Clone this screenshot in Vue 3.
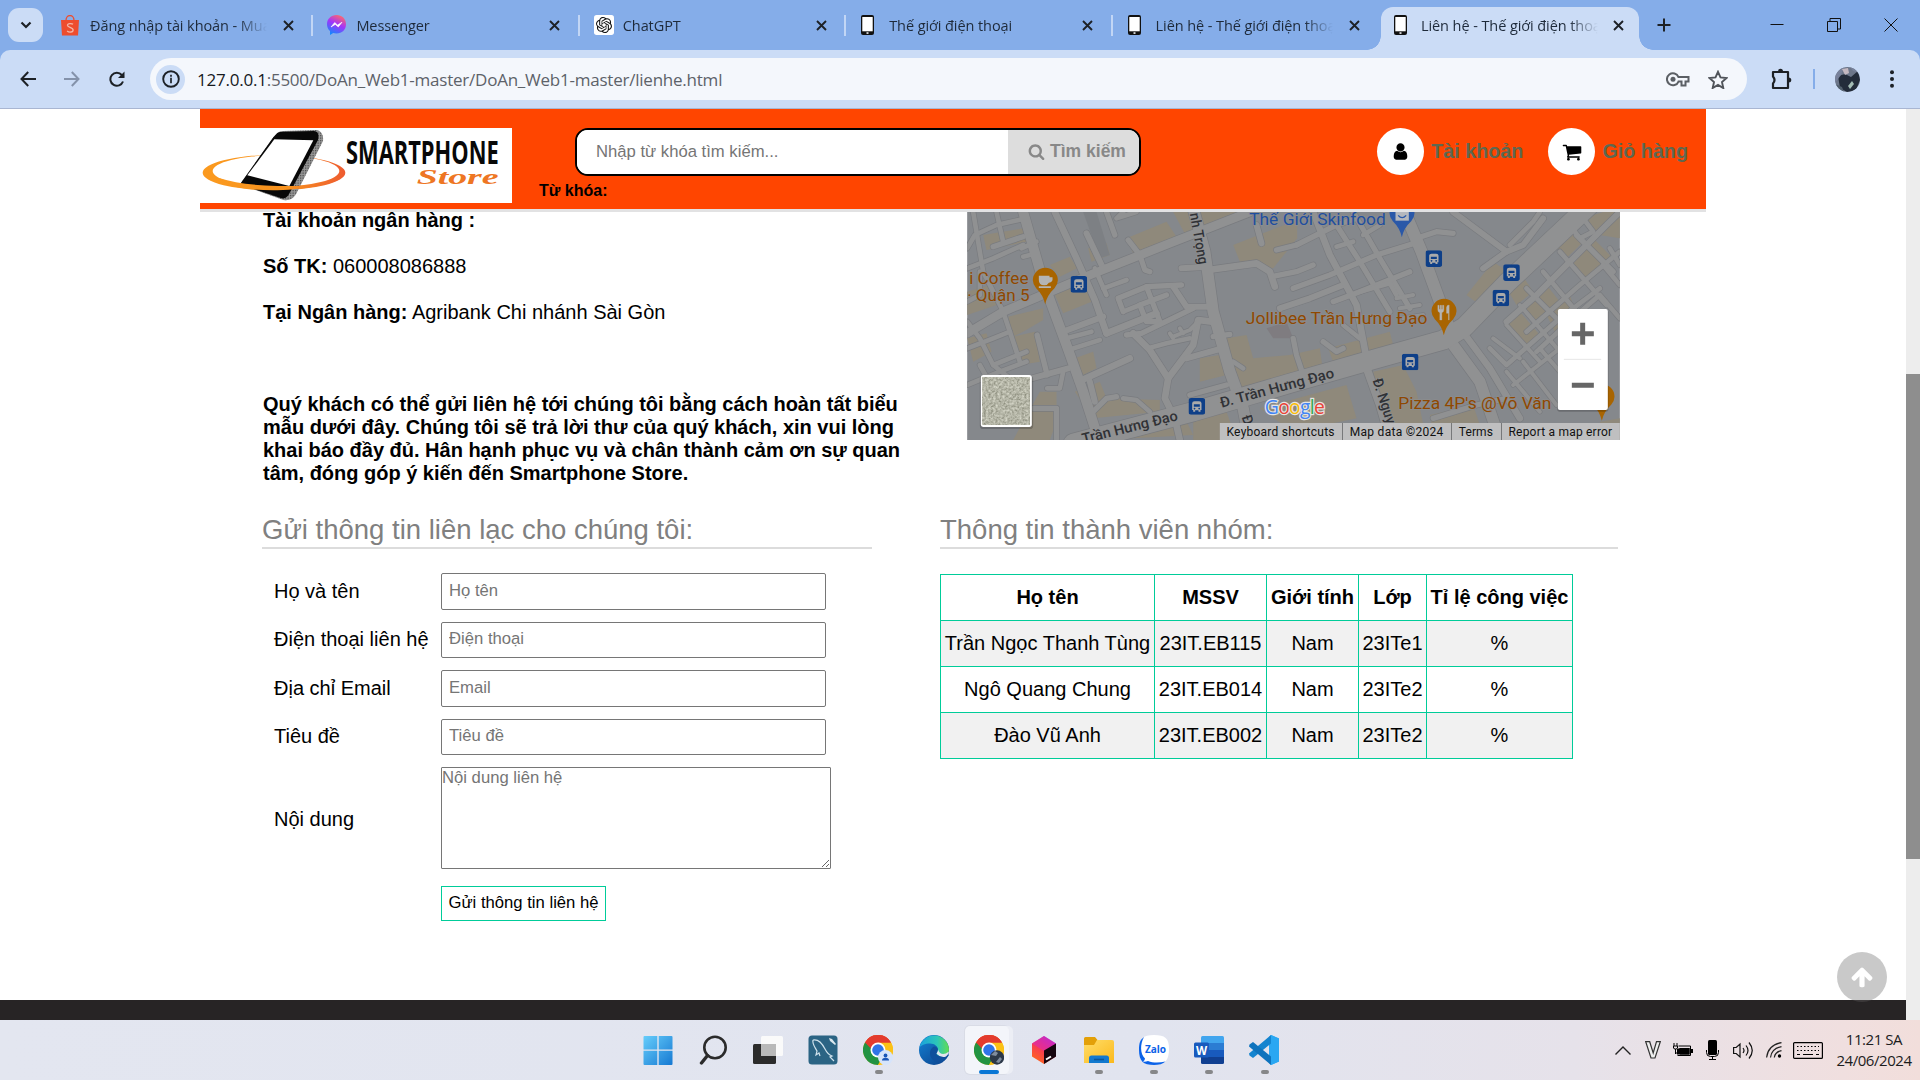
<script setup>
const tabs = [
  { icon: 'shopee', title: 'Đăng nhập tài khoản - Mua sắm' },
  { icon: 'messenger', title: 'Messenger' },
  { icon: 'gpt', title: 'ChatGPT' },
  { icon: 'phone', title: 'Thế giới điện thoại' },
  { icon: 'phone', title: 'Liên hệ - Thế giới điện thoại' },
  { icon: 'phone', title: 'Liên hệ - Thế giới điện thoại', active: true },
]

const fields = [
  { label: 'Họ và tên', hint: 'Họ tên' },
  { label: 'Điện thoại liên hệ', hint: 'Điện thoại' },
  { label: 'Địa chỉ Email', hint: 'Email' },
  { label: 'Tiêu đề', hint: 'Tiêu đề' },
]

const members = [
  ['Trần Ngọc Thanh Tùng', '23IT.EB115', 'Nam', '23ITe1', '%'],
  ['Ngô Quang Chung', '23IT.EB014', 'Nam', '23ITe2', '%'],
  ['Đào Vũ Anh', '23IT.EB002', 'Nam', '23ITe2', '%'],
]

const apps = [
  { id: 'win' }, { id: 'search' }, { id: 'taskview' }, { id: 'mysql' },
  { id: 'chrome1', open: true }, { id: 'edge' }, { id: 'chrome2', active: true },
  { id: 'cube' }, { id: 'folder', open: true }, { id: 'zalo', open: true },
  { id: 'word', open: true }, { id: 'code', open: true },
]

// built-up blocks on the map
const blocks = [
  'M270 180L330 155L352 190L300 215z', 'M385 130L440 115L450 150L395 170z',
  'M500 100L620 50L650 95L520 145z', 'M640 21L860 21L680 95z', 'M820 120L1012 45V100L940 190L840 170z',
  'M285 270L370 235L395 290L310 325z', 'M22 260L90 240L110 300L22 330z', 'M145 335L250 310V345L190 380L160 395z',
  'M22 400L80 385L95 440L40 470z', 'M160 395L225 380L240 470L180 480z', 'M345 460L400 440L410 490L370 510z',
  'M70 90L190 70L200 110L80 135z', 'M345 560L420 530L440 580L600 585V620L400 640z', 'M720 460L780 450L800 510L720 530z',
  'M800 400L860 390L880 460L990 450L1080 430L1090 500L830 560z', 'M480 650L660 610L700 690L420 705z',
  'M700 640L800 620L830 705H700z', 'M900 610L1160 540L1190 640L1000 680z', 'M240 560H290V650L270 705H160z',
  'M1105 430L1290 380L1300 420L1120 470z', 'M1240 500L1330 480L1370 560L1400 705H1290z',
  'M1520 270L1600 170L1650 205L1560 300z', 'M1640 250L1690 215L1720 260L1670 300z',
  'M1690 310L1760 240L1800 290L1720 350z', 'M1780 120L1830 70L1870 110L1820 160z', 'M1830 180L1900 100L1960 160L1870 230z',
  'M1870 40L1930 21H1980V100L1920 90z', 'M1410 630L1540 600L1560 660L1420 680z', 'M1760 330L1830 270L1850 330L1790 390z',
  'M1920 650L1980 640V705H1930z', 'M1640 350L1680 320L1740 390L1700 420z',
]

// streets: [path, width]
const roads = [
  ['M22 130L45 90L110 60L200 40', 14], ['M22 190L100 160L190 120', 14], ['M40 21L70 200L130 320L180 470', 14],
  ['M110 21L130 110', 14], ['M100 125L190 95', 16], ['M22 290L60 270L60 200', 14], ['M185 130L230 110', 14], ['M190 155L230 145', 14],
  ['M22 350L60 400L100 480L200 440', 14], ['M22 430L100 400L150 380', 14], ['M22 540L120 500L200 470', 14],
  ['M60 480L110 570L150 560', 14], ['M100 480L150 520', 14], ['M232 390L262 510', 16],
  ['M180 530L325 490', 18], ['M220 610H290V705', 16], ['M262 550H300L310 500', 14],
  ['M440 21L465 90', 16], ['M380 85L430 190', 18], ['M505 105L540 150L555 195L570 200', 16],
  ['M490 21L470 40L530 21', 14], ['M310 380L430 335', 18], ['M320 400L395 380', 14], ['M325 435L420 405', 14],
  ['M440 385L590 325', 20], ['M405 190L440 270', 14], ['M430 250L500 225', 14],
  ['M490 320L475 280L560 245L665 240', 16], ['M560 245L600 350L560 350L540 300L620 270', 16], ['M490 320L540 300', 14],
  ['M640 245L680 305L755 305', 18], ['M665 190L745 185', 18], ['M745 195L890 175L930 200L945 245', 20],
  ['M935 215L1010 200L1060 180', 16], ['M890 60L905 115', 18], ['M950 135L1010 120', 16],
  ['M500 390L545 385L700 310', 16], ['M520 385L570 435L625 520L700 420L715 345L755 350', 20],
  ['M565 430L620 415L690 400', 14], ['M625 520L615 580L645 640L660 705', 20], ['M680 460L780 432', 18],
  ['M630 385L640 400M660 370L670 385M640 395L690 375L715 350', 12], ['M760 395L810 388', 16],
  ['M355 530L510 460', 20], ['M390 530L405 590', 18], ['M400 620L440 580L470 575', 16], ['M490 580L530 585L570 620', 14],
  ['M690 570L800 540', 16], ['M820 470L850 490', 14],
  ['M1000 400L1010 450L1030 510', 16], ['M960 310L1050 280L1150 240', 18],
  ['M1010 120L1130 60L1190 40', 16], ['M1060 21L1110 150L1190 300L1220 460', 20], ['M1130 60L1200 170L1290 320', 16],
  ['M1180 21L1260 160L1350 310', 16], ['M1000 250L1110 210L1250 150L1380 110', 16], ['M1120 290L1200 260L1350 200', 16],
  ['M1210 90L1260 60', 14], ['M1130 125L1180 110', 14], ['M1310 280L1360 270M1320 310L1380 300M1330 340L1390 330', 12],
  ['M1200 260L1290 235L1310 270', 14], ['M1090 410L1130 440L1150 430', 16], ['M1150 360L1200 400', 14],
  ['M1370 100L1430 80L1480 85', 16], ['M1480 21L1640 140L1690 120L1750 40', 18], ['M1650 120L1720 50L1740 21', 14],
  ['M1640 140L1570 190', 18], ['M1210 460L1260 600L1290 705', 24],
  ['M1480 420L1560 530L1620 705', 34], ['M1520 395L1590 490L1680 640', 20], ['M1420 640L1550 600L1640 580', 16],
  ['M1590 430L1640 480L1800 340L1920 250', 14], ['M1600 400L1680 460M1640 360L1740 470M1680 300L1800 440', 12],
  ['M1700 250L1850 400M1750 200L1900 380M1800 140L1940 300', 14], ['M1850 90L1960 200', 16],
  ['M1640 350L1720 280L1840 160L1940 60L1980 21', 18], ['M1700 380L1860 240L1980 140', 14], ['M1730 440L1850 330L1920 270L1980 340', 14],
  ['M1660 540L1800 430M1640 500L1740 620M1690 470L1790 600M1740 430L1800 500', 12],
  ['M1830 60L1860 100L1900 80L1870 40', 14], ['M1950 130L1980 180M1930 180L1980 240', 14],
]
const avenues = [
  ['M22 385L130 320L390 210L630 115L870 21', 26],
  ['M190 21L250 230L320 420L370 560L420 715', 30],
  ['M285 21L350 160L405 285L440 385', 20],
  ['M700 10L735 140L760 320L810 500L850 610L870 715', 34],
  ['M1330 10L1385 140L1440 290L1475 390', 36],
  ['M340 715L700 620L990 535L1235 465L1450 405L1515 365L1640 235L1900 -10', 58],
]
const stops = [[357, 238], [711, 604], [1422, 161], [1655, 203], [1623, 279], [1351, 471]]
</script>

<template>
  <div class="screen">
    <svg class="defs" width="0" height="0">
      <symbol id="bus" viewBox="0 0 50 50">
        <rect width="50" height="50" rx="8" fill="#0e3f88" />
        <path fill="#aaa" fill-rule="evenodd" d="M11 16q0-6 7-6h14q7 0 7 6v20h-3v5h-6v-4H20v4h-6v-5h-3zM16 19v7h18v-7zM18 29a2.500 2.500 0 1 0 .1 0zM32 29a2.500 2.500 0 1 0 .1 0z" />
      </symbol>
      <symbol id="chrome" viewBox="0 0 48 48">
        <circle cx="24" cy="24" r="24" fill="#fbc116" />
        <path d="M24 24L3.200 12A24 24 0 0 1 44.800 12z" fill="#e33b2e" />
        <path d="M3.200 12A24 24 0 0 0 24 48L34.400 30L24 24z" fill="#229342" />
        <path d="M24 12H44.800A24 24 0 0 1 24 48L34.400 30z" fill="#fbc116" />
        <path d="M3.200 12L13.600 30L24 12z" fill="#229342" />
        <path d="M3.200 12A24 24 0 0 1 44.800 12H24L13 22z" fill="#e33b2e" />
        <circle cx="24" cy="24" r="12" fill="#fff" />
        <circle cx="24" cy="24" r="9.300" fill="#2f74e8" />
      </symbol>
    </svg>

    <div class="tabstrip">
      <div class="tab-search">
        <svg width="12" height="8" viewBox="0 0 12 8"><path d="M1.500 1.500L6 6l4.500-4.500" fill="none" stroke="#1d2126" stroke-width="2.200" /></svg>
      </div>
      <div v-for="(t, i) in tabs" :key="i" class="tab" :class="{ active: t.active, ruled: i < 4 }">
        <span class="fav">
          <svg v-if="t.icon === 'shopee'" width="18" height="21" viewBox="0 0 18 21">
            <path d="M0 5h18l-1 15.500H1z" fill="#ee4d2d" /><path d="M5 5.500a4 5 0 0 1 8 0" fill="none" stroke="#ee4d2d" stroke-width="1.300" />
            <path d="M12 9.300c-1-.9-5.500-1.400-5.500 1 0 2.300 5.600 1.800 5.600 4.600 0 2.500-4 2.800-6 1" fill="none" stroke="#f3b6a6" stroke-width="1.300" />
          </svg>
          <svg v-else-if="t.icon === 'messenger'" width="19" height="20" viewBox="0 0 19 20">
            <defs><linearGradient id="msg" x1=".7" y1="0" x2=".25" y2="1"><stop offset="0" stop-color="#ff6968" /><stop offset=".45" stop-color="#a334fa" /><stop offset="1" stop-color="#0a8cff" /></linearGradient></defs>
            <path d="M9.500 0C4 0 0 4 0 9.200c0 2.800 1.100 5.200 3 6.800V20l3.200-1.900c1 .3 2.200.4 3.300.4 5.500 0 9.500-4 9.500-9.300S15 0 9.500 0z" fill="url(#msg)" />
            <path d="M4 12l3.700-4.500 2.800 2.600L15 7.200l-3.700 4.700-3-2.500z" fill="#fff" stroke="#fff" stroke-width=".6" />
          </svg>
          <svg v-else-if="t.icon === 'gpt'" width="20" height="20" viewBox="-3 -3 30 30">
            <rect x="-3" y="-3" width="30" height="30" rx="4" fill="#fff" />
            <path d="M22.282 9.821a5.985 5.985 0 0 0-.516-4.910 6.046 6.046 0 0 0-6.510-2.900A6.065 6.065 0 0 0 4.981 4.182a5.985 5.985 0 0 0-3.998 2.900 6.046 6.046 0 0 0 .743 7.097 5.980 5.980 0 0 0 .511 4.911 6.051 6.051 0 0 0 6.515 2.900A5.985 5.985 0 0 0 13.260 24a6.056 6.056 0 0 0 5.772-4.206 5.989 5.989 0 0 0 3.998-2.900 6.056 6.056 0 0 0-.748-7.073zm-9.022 12.608a4.476 4.476 0 0 1-2.876-1.041l.142-.080 4.778-2.758a.795.795 0 0 0 .393-.681v-6.737l2.020 1.169a.071.071 0 0 1 .038.052v5.583a4.504 4.504 0 0 1-4.495 4.494zm-9.661-4.125a4.471 4.471 0 0 1-.535-3.014l.142.085 4.783 2.758a.771.771 0 0 0 .781 0l5.843-3.369v2.332a.080.080 0 0 1-.033.062L9.740 19.950a4.499 4.499 0 0 1-6.141-1.646zM2.341 7.896a4.485 4.485 0 0 1 2.366-1.973V11.600a.766.766 0 0 0 .388.677l5.814 3.354-2.020 1.169a.076.076 0 0 1-.071 0l-4.830-2.787A4.504 4.504 0 0 1 2.341 7.872zm16.596 3.856L13.104 8.364 15.119 7.200a.076.076 0 0 1 .071 0l4.830 2.791a4.494 4.494 0 0 1-.677 8.104v-5.677a.790.790 0 0 0-.407-.667zm2.011-3.023l-.142-.085-4.774-2.782a.776.776 0 0 0-.785 0L9.409 9.230V6.897a.066.066 0 0 1 .028-.062l4.830-2.787a4.499 4.499 0 0 1 6.680 4.660zM8.307 12.863l-2.020-1.164a.080.080 0 0 1-.038-.057V6.074a4.499 4.499 0 0 1 7.376-3.454l-.142.081L8.704 5.459a.795.795 0 0 0-.393.681zm1.098-2.365l2.602-1.500 2.607 1.500v2.999l-2.597 1.500-2.607-1.500z" fill="#111" />
          </svg>
          <svg v-else width="13" height="20" viewBox="0 0 13 20">
            <rect width="13" height="20" rx="2" fill="#111" /><rect x="1.300" y="2" width="10.400" height="14.300" fill="#fff" /><rect x="5.500" y="17.300" width="2" height="1.500" fill="#fff" />
          </svg>
        </span>
        <span class="tab-title">{{ t.title }}</span>
        <svg class="tab-x" width="11" height="11" viewBox="0 0 11 11"><path d="M1 1l9 9M10 1l-9 9" stroke="#1d2126" stroke-width="1.900" /></svg>
      </div>
      <svg class="plus" width="14" height="14" viewBox="0 0 14 14"><path d="M7 0.500v13M.5 7h13" stroke="#1d2126" stroke-width="2" /></svg>
      <div class="win-btns">
        <svg width="14" height="14" viewBox="0 0 14 14"><path d="M.5 6.500h13" stroke="#111" /></svg>
        <svg width="14" height="14" viewBox="0 0 14 14"><path d="M.5 3.500h10v10H.5zM3 3V.5h10.500V11H11" fill="none" stroke="#111" /></svg>
        <svg width="14" height="14" viewBox="0 0 14 14"><path d="M.5.5l13 13M13.500.5l-13 13" stroke="#111" /></svg>
      </div>
    </div>

    <div class="toolbar-wrap">
      <div class="toolbar">
        <div class="nav">
          <svg width="16" height="16" viewBox="0 0 16 16"><path d="M8.200 1L1.500 8l6.700 7M1.500 8H16" fill="none" stroke="#1d2126" stroke-width="2" /></svg>
          <svg width="16" height="16" viewBox="0 0 16 16"><path d="M7.800 1L14.500 8l-6.700 7M14.500 8H0" fill="none" stroke="#8492aa" stroke-width="2" /></svg>
          <svg width="16" height="17" viewBox="0 0 16 17"><path d="M14 10.500A6.500 6.500 0 1 1 12.800 4L14.500 6" fill="none" stroke="#1d2126" stroke-width="2" /><path d="M15.500.5v6.500H9z" fill="#1d2126" /></svg>
        </div>
        <div class="omnibox">
          <span class="info">
            <svg width="18" height="18" viewBox="0 0 18 18"><circle cx="9" cy="9" r="7.800" fill="none" stroke="#1d2126" stroke-width="1.900" /><path d="M9 7.800v5.400M9 4.700v2" stroke="#1d2126" stroke-width="1.700" /></svg>
          </span>
          <span class="url"><b>127.0.0.1</b>:5500/DoAn_Web1-master/DoAn_Web1-master/lienhe.html</span>
          <svg class="key" width="24" height="15" viewBox="0 0 24 15"><path d="M12.500 5A6 6 0 1 0 12.500 9.500H15.500V13.500H19.500V9.500H22.500V5z" fill="none" stroke="#5b5f64" stroke-width="2" /><circle cx="7" cy="7.300" r="2.500" fill="#5b5f64" /></svg>
          <svg width="20" height="19" viewBox="0 0 20 19"><path d="M10 1.800l2.500 5.600 6 .6-4.500 4.100 1.300 6-5.300-3.200L4.700 18 6 12.100 1.500 8l6-.6z" fill="none" stroke="#50545a" stroke-width="1.900" /></svg>
        </div>
        <svg class="puzzle" width="22" height="22" viewBox="0 0 22 22"><path d="M2 4H17V20H2V15.500Q5 12 2 8.500z" fill="none" stroke="#1d2126" stroke-width="2.200" stroke-linejoin="round" /><path d="M7 3.500a2.500 2.800 0 0 1 5 0zM17.500 9.500a2.800 2.500 0 0 1 0 5z" fill="#1d2126" /></svg>
        <span class="bar-rule"></span>
        <svg class="avatar" width="25" height="25" viewBox="0 0 25 25">
          <defs><clipPath id="av"><circle cx="12.500" cy="12.500" r="12.500" /></clipPath></defs>
          <g clip-path="url(#av)"><rect width="25" height="25" fill="#6c7689" /><path d="M3 9l7-2 6 3 7-6 2 9-4 10-9 2-7-4z" fill="#232c3a" /><path d="M0 0h9l-3 8-6 8zM15 0h10v6l-7-2z" fill="#77819a" /><path d="M7 2l6-1 1 5-4 2z" fill="#c3b8c0" /><path d="M13 19l4-5 2 3-4 5z" fill="#a3bcb4" /><path d="M0 17l7 3 2 5H0z" fill="#515f6c" /></g>
        </svg>
        <svg class="dots" width="4" height="18" viewBox="0 0 4 18"><g fill="#1d2126"><circle cx="2" cy="2.200" r="2" /><circle cx="2" cy="9" r="2" /><circle cx="2" cy="15.800" r="2" /></g></svg>
      </div>
    </div>

    <div class="viewport">
      <div class="page">
        <header class="site-head">
          <svg class="logo" width="312" height="75" viewBox="30 69 936 225">
            <defs>
              <linearGradient id="ring" x1="0" x2="1"><stop offset="0" stop-color="#fb9a1f" /><stop offset=".6" stop-color="#f8921e" /><stop offset="1" stop-color="#ee5b30" /></linearGradient>
              <pattern id="mesh" width="5" height="5" patternUnits="userSpaceOnUse"><rect width="5" height="5" fill="#999" /><rect width="2.500" height="2.500" fill="#444" /></pattern>
            </defs>
            <rect x="30" y="69" width="936" height="225" fill="#fff" />
            <path fill="url(#ring)" fill-rule="evenodd" d="M38 203a214 53 0 1 0 428 0a214 53 0 1 0 -428 0zM68 198a190 47 0 1 0 380 0a190 47 0 1 0 -380 0z" />
            <path d="M262 84Q268 78 280 78L380 75Q402 80 399 108L318 268Q304 290 280 285L150 238L250 97z" fill="url(#mesh)" />
            <path d="M262 84Q268 80 280 80L372 78Q390 80 384 105L300 262Q290 285 272 279L150 238L250 97z" fill="#080808" />
            <path d="M253 103L370 106L298 243L172 211z" fill="#fff" />
            <path fill="url(#ring)" d="M60 225Q150 258 262 256Q400 250 455 220Q400 246 262 243Q150 240 90 220z" />
            <text x="468" y="177" class="logo-a" textLength="458" lengthAdjust="spacingAndGlyphs">SMARTPHONE</text>
            <text x="680" y="236" class="logo-b" textLength="246" lengthAdjust="spacingAndGlyphs">Store</text>
          </svg>
          <div class="search-col">
            <div class="search">
              <input type="text" placeholder="Nhập từ khóa tìm kiếm..." />
              <button>
                <svg width="17" height="17" viewBox="0 0 1792 1792"><path d="M1216 832q0-185-131.500-316.500t-316.500-131.500-316.500 131.500-131.500 316.500 131.500 316.500 316.500 131.500 316.500-131.500 131.500-316.500zm512 832q0 52-38 90t-90 38q-54 0-90-38l-343-342q-179 124-399 124-143 0-273.500-55.500t-225-150-150-225-55.500-273.500 55.500-273.500 150-225 225-150 273.500-55.500 273.500 55.500 225 150 150 225 55.500 273.500q0 220-124 399l343 343q37 37 37 90z" fill="#888" /></svg>
                Tìm kiếm
              </button>
            </div>
            <div class="keywords">Từ khóa:</div>
          </div>
          <nav class="links">
            <a class="link">
              <i><svg width="19" height="19" viewBox="0 0 1792 1792"><path d="M1536 1399q0 109-62.500 187t-150.500 78h-854q-88 0-150.500-78t-62.500-187q0-85 8.500-160.500t31.500-152 58.500-131 94-89 134.500-34.500q131 128 313 128t313-128q76 0 134.500 34.500t94 89 58.500 131 31.500 152 8.500 160.500zm-256-887q0 159-112.500 271.500t-271.500 112.500-271.500-112.500-112.500-271.500 112.500-271.500 271.500-112.500 271.500 112.500 112.500 271.500z" /></svg></i>
              Tài khoản
            </a>
            <a class="link">
              <i><svg width="20" height="20" viewBox="0 0 1792 1792"><path d="M704 1536q0 52-38 90t-90 38-90-38-38-90 38-90 90-38 90 38 38 90zm896 0q0 52-38 90t-90 38-90-38-38-90 38-90 90-38 90 38 38 90zm128-1088v512q0 24-16.500 42.500t-40.500 21.500l-1044 122q13 60 13 70 0 16-24 64h920q26 0 45 19t19 45-19 45-45 19h-1024q-26 0-45-19t-19-45q0-11 8-31.500t16-36 21.500-40 15.500-29.500l-177-823h-204q-26 0-45-19t-19-45 19-45 45-19h256q16 0 28.500 6.500t19.500 15.500 13 24.500 8 26 5.500 29.500 4.500 26h1201q26 0 45 19t19 45z" /></svg></i>
              Giỏ hàng
            </a>
          </nav>
        </header>

        <section class="contact">
          <div class="bank">
            <p><b>Tài khoản ngân hàng :</b></p>
            <p><b>Số TK:</b> 060008086888</p>
            <p><b>Tại Ngân hàng:</b> Agribank Chi nhánh Sài Gòn</p>
            <p class="note">Quý khách có thể gửi liên hệ tới chúng tôi bằng cách hoàn tất biểu<br />mẫu dưới đây. Chúng tôi sẽ trả lời thư của quý khách, xin vui lòng<br />khai báo đầy đủ. Hân hạnh phục vụ và chân thành cảm ơn sự quan<br />tâm, đóng góp ý kiến đến Smartphone Store.</p>
          </div>
          <svg class="map" width="653" height="231" viewBox="22 12 1958 693">
            <rect x="22" y="12" width="1958" height="693" fill="#85888c" />
            <path v-for="(b, i) in blocks" :key="'b' + i" :d="b" fill="#8f897b" />
            <path d="M920 370L980 350L1000 400L940 400z" fill="#7f7c80" />
            <path d="M370 21H410L450 150L420 160z" fill="#7d8084" />
            <g fill="none" stroke-linecap="round" stroke-linejoin="round">
              <path v-for="(r, i) in roads" :key="'c' + i" :d="r[0]" stroke="#797b7f" :stroke-width="r[1] + 4" />
              <path v-for="(r, i) in avenues" :key="'d' + i" :d="r[0]" stroke="#797b7f" :stroke-width="r[1] + 4" />
              <path v-for="(r, i) in roads" :key="'e' + i" :d="r[0]" stroke="#909192" :stroke-width="r[1]" />
              <path v-for="(r, i) in avenues" :key="'f' + i" :d="r[0]" stroke="#909192" :stroke-width="r[1]" />
            </g>
            <use v-for="(s, i) in stops" :key="'s' + i" href="#bus" :x="s[0] - 25" :y="s[1] - 25" width="50" height="50" />
            <g fill="#a86400">
              <path d="M256 298Q250 270 229 250Q219 238 219 226A37.500 37.500 0 0 1 294 226Q294 238 284 250Q262 270 256 298z" />
              <path d="M1452 391Q1446 363 1425 343Q1415 331 1415 319A37.500 37.500 0 0 1 1490 319Q1490 331 1480 343Q1458 363 1452 391z" />
              <path d="M1926 647Q1920 619 1899 599Q1889 587 1889 575A37.500 37.500 0 0 1 1964 575Q1964 587 1954 599Q1932 619 1926 647z" />
            </g>
            <path d="M1326 97Q1320 69 1299 49Q1289 37 1289 25A37.500 37.500 0 0 1 1364 25Q1364 37 1354 49Q1332 69 1326 97z" fill="#2a58a8" />
            <path d="M1307 12h40v35h-40z" fill="#b4b7bd" /><path d="M1315 31q12 14 24 0" fill="none" stroke="#2a58a8" stroke-width="4" />
            <path d="M237 212h32v5h9q2 16-11 16-4 8-14 8-16 0-16-16zM237 244h36v5h-36z" fill="#b4b4b4" />
            <path d="M1434 301v14q0 6 6 8v22h6v-22q6-2 6-8v-14h-4v12h-3v-12h-4v12h-3v-12zM1466 345v-20h-6v-18q1-7 8-7v45z" fill="#b4b4b4" stroke="#b4b4b4" />
            <g class="poi">
              <text x="28" y="236" textLength="178" lengthAdjust="spacingAndGlyphs">i Coffee</text><text x="22" y="288" textLength="187" lengthAdjust="spacingAndGlyphs">· Quận 5</text>
              <text x="858" y="356" textLength="545" lengthAdjust="spacingAndGlyphs">Jollibee Trần Hưng Đạo</text>
              <text x="1315" y="612" textLength="460" lengthAdjust="spacingAndGlyphs">Pizza 4P's @Võ Văn</text>
              <text x="868" y="60" class="blue" textLength="410" lengthAdjust="spacingAndGlyphs">Thế Giới Skinfood</text>
            </g>
            <g class="street">
              <text transform="translate(785 608) rotate(-15)" textLength="352" lengthAdjust="spacingAndGlyphs">Đ. Trần Hưng Đạo</text>
              <text transform="translate(370 716) rotate(-14)" textLength="295" lengthAdjust="spacingAndGlyphs">Trần Hưng Đạo</text>
              <text transform="translate(690 26) rotate(80)" textLength="156" lengthAdjust="spacingAndGlyphs">nh Trọng</text>
              <text transform="translate(1238 526) rotate(72)" textLength="140" lengthAdjust="spacingAndGlyphs">Đ. Nguy</text>
              <text transform="translate(845 635) rotate(72)">Đ</text>
            </g>
            <text x="915" y="626" class="google" textLength="180"><tspan fill="#4285f4">G</tspan><tspan fill="#ea4335">o</tspan><tspan fill="#fbbc05">o</tspan><tspan fill="#4285f4">g</tspan><tspan fill="#34a853">l</tspan><tspan fill="#ea4335">e</tspan></text>
            <rect x="780" y="654" width="1200" height="51" fill="#bfbfc0" />
            <path d="M1148 654v51M1475 654v51M1625 654v51" stroke="#77787a" stroke-width="3" />
            <g class="legal">
              <text x="800" y="692" textLength="324">Keyboard shortcuts</text><text x="1170" y="692" textLength="280">Map data ©2024</text>
              <text x="1497" y="692" textLength="102">Terms</text><text x="1646" y="692" textLength="311">Report a map error</text>
            </g>
            <defs>
              <filter id="sat" x="0" y="0" width="1" height="1"><feTurbulence type="fractalNoise" baseFrequency=".14" numOctaves="4" seed="4" /><feColorMatrix values=".6 0 0 0 .16 .6 0 0 0 .165 .55 0 0 0 .11 0 0 0 0 1" /></filter>
            </defs>
            <rect x="60" y="512" width="160" height="160" rx="10" fill="#000" opacity=".2" />
            <rect x="63" y="510" width="153" height="156" rx="8" fill="#fff" />
            <rect x="69" y="516" width="141" height="144" fill="#6d6f60" filter="url(#sat)" />
            <rect x="1792" y="314" width="154" height="306" rx="8" fill="#000" opacity=".2" />
            <rect x="1794" y="312" width="150" height="303" rx="6" fill="#fff" />
            <path d="M1812 463h112" stroke="#e6e6e6" stroke-width="3" />
            <path d="M1836 386h66M1868.500 353v66M1836 541h66" stroke="#666" stroke-width="15" />
          </svg>
        </section>

        <section class="panels">
          <div class="form-col">
            <h2>Gửi thông tin liên lạc cho chúng tôi:</h2>
            <form>
              <label v-for="f in fields" :key="f.label" class="row"><span>{{ f.label }}</span><input type="text" :placeholder="f.hint" /></label>
              <label class="row tall"><span>Nội dung</span><textarea placeholder="Nội dung liên hệ"></textarea></label>
              <button type="button" class="send">Gửi thông tin liên hệ</button>
            </form>
          </div>
          <div class="team-col">
            <h2>Thông tin thành viên nhóm:</h2>
            <table>
              <colgroup><col class="c-name" /><col class="c-id" /><col class="c-sex" /><col class="c-class" /><col class="c-share" /></colgroup>
              <tbody>
                <tr><th>Họ tên</th><th>MSSV</th><th>Giới tính</th><th>Lớp</th><th>Tỉ lệ công việc</th></tr>
                <tr v-for="m in members" :key="m[0]"><td v-for="(c, i) in m" :key="i">{{ c }}</td></tr>
              </tbody>
            </table>
          </div>
        </section>
        <footer class="site-foot"></footer>
        <div class="to-top"><svg width="24" height="24" viewBox="0 0 1792 1792"><path d="M1675 971q0 51-37 90l-75 75q-38 38-91 38-54 0-90-38l-294-293v704q0 52-37.500 84.500t-90.500 32.500h-128q-53 0-90.500-32.500t-37.500-84.500v-704l-294 293q-36 38-90 38t-90-38l-75-75q-38-38-38-90 0-53 38-91l651-651q35-37 90-37 54 0 91 37l651 651q37 39 37 91z" fill="#fff" /></svg></div>
      </div>
      <div class="scroll"><div class="thumb"></div></div>
    </div>

    <div class="taskbar">
      <div class="apps">
        <div v-for="a in apps" :key="a.id" class="app" :class="{ on: a.active, open: a.open }">
          <svg width="30" height="30" viewBox="0 0 30 30">
            <template v-if="a.id === 'win'">
              <defs><linearGradient id="wg" x1="0" y1="0" x2="1" y2="1"><stop offset="0" stop-color="#66cdfb" /><stop offset="1" stop-color="#1679d2" /></linearGradient></defs>
              <path d="M.5 2q0-1 1-1H14.300V14.500H.5zM15.700 1H28.500q1 0 1 1V14.500H15.700zM.5 15.800H14.300V30H1.500q-1 0-1-1zM15.700 15.800H29.500V29q0 1-1 1H15.700z" fill="url(#wg)" />
            </template>
            <template v-else-if="a.id === 'search'">
              <circle cx="17" cy="12.500" r="10.700" fill="none" stroke="#2b2b2b" stroke-width="2.600" /><path d="M9.500 20.500L3.500 28" stroke="#2b2b2b" stroke-width="3.400" stroke-linecap="round" />
            </template>
            <template v-else-if="a.id === 'taskview'">
              <rect x="8" y="1" width="22" height="20" rx="1.500" fill="#fafafa" /><rect x="0" y="9" width="23" height="20" rx="1.500" fill="#2b2b2b" /><rect x="8" y="9" width="15" height="12" fill="#b9b9b9" />
            </template>
            <template v-else-if="a.id === 'mysql'">
              <rect x=".5" y=".5" width="29" height="29" rx="3.500" fill="#2b6484" /><path d="M5 5c5-1 9 3 12 9 2 4 4 6 7 7l-2 1 4 4M5 5c-1 4 2 7 4 11l-1 4 3-2 1 3" fill="none" stroke="#cfe2ec" stroke-width="1.200" /><path d="M21 3l1 3 5 4 1-1-4-5z" fill="#dbe8ee" />
            </template>
            <template v-else-if="a.id === 'chrome1'">
              <use href="#chrome" width="30" height="30" /><circle cx="22.500" cy="22.500" r="7.500" fill="#d6e4fb" /><circle cx="22.500" cy="20.500" r="1.900" fill="#1a56b8" /><path d="M19 25.500q0-2.700 3.500-2.700t3.500 2.700z" fill="#1a56b8" />
            </template>
            <template v-else-if="a.id === 'edge'">
              <defs><linearGradient id="eg" x1="0" y1=".3" x2="1" y2=".3"><stop offset="0" stop-color="#1aa0de" /><stop offset=".6" stop-color="#2cc6b8" /><stop offset="1" stop-color="#62dd52" /></linearGradient><linearGradient id="eb" x1="0" y1="0" x2=".8" y2="1"><stop offset="0" stop-color="#1383d6" /><stop offset="1" stop-color="#0c4691" /></linearGradient></defs>
              <circle cx="15" cy="15" r="15" fill="url(#eb)" />
              <path d="M.3 13A15 15 0 0 1 30 14c0 5-4 7-7.500 7-4 0-5.500-1.500-5-2.500.5-1 1.500-2 1.500-4 0-3-3.500-6-8-6C6 8.500 1.500 10.500.3 13z" fill="url(#eg)" />
              <path d="M11 18c-.3 6 5 9 9 9 3 0 5.500-1.200 7.500-3.500L30 20l-2-2q-2.500 3-5.500 3c-4 0-5.500-1.500-5-2.500.5-1 1.500-2 1.500-4q-1-3-4-3-4 2-4 6.500z" fill="#0f4f9c" /><path d="M17.500 18.500c.5-1 1.500-2 1.500-4q3 8 11 2 0 2.500-3 5-5 2-9.500-3z" fill="#e2e5ee" />
            </template>
            <template v-else-if="a.id === 'chrome2'">
              <use href="#chrome" width="30" height="30" /><circle cx="23" cy="22.500" r="7.200" fill="#2c3848" /><path d="M17 20l4-4 3 2-2 3zM22 27l4-5 2 2-3 4z" fill="#7f8c9d" />
            </template>
            <template v-else-if="a.id === 'cube'">
              <defs><linearGradient id="cg" x1=".8" y1="0" x2=".2" y2="1"><stop offset="0" stop-color="#a62be0" /><stop offset=".45" stop-color="#f7335a" /><stop offset="1" stop-color="#ff6a1a" /></linearGradient></defs>
              <path d="M15 1l12 7.500v13L15 29 3 21.500v-13z" fill="url(#cg)" /><path d="M15 1l12 7.500-12 7.500L3 8.500z" fill="#d52ac0" opacity=".55" /><path d="M27 8.500v13L15 29V15.500z" fill="#16060f" /><path d="M17 24.500l5-3" stroke="#fff" stroke-width="2" />
            </template>
            <template v-else-if="a.id === 'folder'">
              <defs><linearGradient id="fg" x1="0" y1="0" x2="1" y2="1"><stop offset="0" stop-color="#ffdd68" /><stop offset="1" stop-color="#fbb91c" /></linearGradient></defs>
              <path d="M0 3.500Q0 2 1.500 2H11l2.500 3H28v7H0z" fill="#e3a008" /><path d="M0 10h10l3-5h15q2 0 2 2v21H0z" fill="url(#fg)" /><path d="M5 28v-5q0-2.500 2.500-2.500h15q2.500 0 2.500 2.500v5z" fill="#1279cf" /><path d="M10 24.500h10" stroke="#0a559a" stroke-width="1.600" />
            </template>
            <template v-else-if="a.id === 'zalo'">
              <path d="M15 0C26 0 30 3 30 14S26 30 15 30 0 26 0 15 4 0 15 0z" fill="#fff" /><path d="M5 2C1 5 0 8 0 15c0 11 4 15 15 15 5 0 9-1 11.500-3.500C20 28 14 28 9 26q-3 1-5 .5 2-1 2-3C1 19 1 9 5 2z" fill="#0b62e8" />
              <text x="16.500" y="17.500" class="zalo" text-anchor="middle">Zalo</text>
            </template>
            <template v-else-if="a.id === 'word'">
              <path d="M7 2.500Q7 1 8.500 1H28.500Q30 1 30 2.500V8H7z" fill="#41a5ee" /><path d="M7 8h23v7H7z" fill="#2b7cd3" /><path d="M7 15h23v7H7z" fill="#185abd" /><path d="M7 22h23v5.500q0 1.500-1.500 1.500h-20Q7 29 7 27.500z" fill="#103f91" /><rect x="0" y="7.500" width="15" height="15" rx="1.500" fill="#185abd" />
              <text x="7.500" y="19.500" class="word" text-anchor="middle">W</text>
            </template>
            <template v-else>
              <path d="M22 0l8 3.500v23L22 30 20 28V2z" fill="#2aa7f2" /><path d="M22 0v8.500L4 23 .5 20.500 0 18.500z" fill="#1484cf" /><path d="M22 30v-8.500L4 7 .5 9.500 0 11.500z" fill="#0e73bd" /><path d="M22 0l8 3.500v23L22 30z" fill="#2aa7f2" />
            </template>
          </svg>
        </div>
      </div>
      <div class="tray">
        <svg width="16" height="9" viewBox="0 0 16 9"><path d="M.5 8.500L8 1l7.500 7.500" fill="none" stroke="#222" stroke-width="1.400" /></svg>
        <svg width="16" height="18" viewBox="0 0 16 18"><path d="M.7.7h4L8.200 12 11.500.7h3.800L10 17H6z" fill="#eee" stroke="#333" stroke-width="1.200" /></svg>
        <svg width="20" height="14" viewBox="0 0 20 14"><path d="M5.500 3h12v9.500h-13M4 11v-2" fill="none" stroke="#000" /><rect x="7" y="5" width="9.500" height="6.500" /><path d="M4 6v5.500h12.500V5H7zM18 6h2v4h-2z" /><path d="M1 0v3M4 0v3M.5 3h4v2q0 1-2 1t-2-1zM2.500 6v5" fill="none" stroke="#000" /></svg>
        <svg width="13" height="20" viewBox="0 0 13 20"><rect x="2" y="0" width="9" height="15" rx="1.500" /><path d="M.5 10v2.500q0 4 4 4h4q4 0 4-4V10M6.500 16.500v3M3 19.500h7" fill="none" stroke="#000" /></svg>
        <svg width="21" height="19" viewBox="0 0 21 19"><path d="M.6 6.500h2.600L7 3v13l-3.800-3.500H.6zM10 7q2 2.500 0 5M13 4.500q4 5 0 10M16 1.500q6.500 8 0 16" fill="none" stroke="#111" stroke-width="1.200" /></svg>
        <svg width="16" height="16" viewBox="0 0 16 16"><path d="M.6 15.500Q2 3 15.500.6M4.500 15.500Q5.500 6.500 15.500 4.600M8.300 15.500Q9 10 15.500 8.600" fill="none" stroke="#222" stroke-width="1.200" /><circle cx="13.500" cy="14" r="1.700" /></svg>
        <svg width="30" height="17" viewBox="0 0 30 17"><rect x=".6" y=".6" width="28.800" height="15.800" rx="1" fill="none" stroke="#000" stroke-width="1.200" /><path d="M4 4.500h22M4 8.500h22" stroke="#000" stroke-width="1.200" stroke-dasharray="1.500 2" /><path d="M4 12.500h3M10 12.500h10M23 12.500h3" stroke="#000" stroke-width="1.200" /></svg>
        <div class="clock"><span>11:21 SA</span><span>24/06/2024</span></div>
      </div>
    </div>
  </div>
</template>

<style>
html, body { margin: 0; background: #fff; }
</style>

<style scoped>
* { box-sizing: border-box; }
.screen { width: 1920px; height: 1080px; display: flex; flex-direction: column; overflow: hidden; font-family: "Liberation Sans", Arial, sans-serif; color: #000; }
svg { display: block; flex: none; }
.defs { position: absolute; }

/* browser chrome */
.tabstrip { height: 50px; flex: none; background: #85ade9; display: flex; align-items: center; font-family: "Open Sans", "Noto Sans", sans-serif; }
.tab-search { width: 35px; height: 34px; margin: 0 3px 0 8px; border-radius: 11px; background: #cbdcf6; display: flex; align-items: center; justify-content: center; flex: none; }
.tab { width: 266.4px; height: 50px; flex: none; display: flex; align-items: center; padding-left: 15px; position: relative; }
.fav { width: 29px; flex: none; display: flex; }
.tab:nth-child(n + 5) .fav { padding-left: 1px; }
.tab-title { width: 179px; overflow: hidden; white-space: nowrap; font-size: 14.500px; letter-spacing: -0.080px; color: #1e2a3a; -webkit-mask-image: linear-gradient(90deg, #000 148px, transparent 177px); mask-image: linear-gradient(90deg, #000 148px, transparent 177px); }
.tab-x { margin-left: 14px; }
.active .tab-title { margin-left: -1px; width: 178px; }
.ruled::after { content: ""; position: absolute; right: -1px; top: 15px; width: 2px; height: 21px; background: #c2d6f5; }
.active::before { content: ""; position: absolute; left: 3px; right: 5px; top: 7px; bottom: 0; background: #cbdcf6; border-radius: 12px 12px 0 0; }
.active::after { content: ""; position: absolute; left: -11px; right: -9px; bottom: 0; height: 14px; background: radial-gradient(circle at 0 0, transparent 13.500px, #cbdcf6 14px) left / 14px 14px no-repeat, radial-gradient(circle at 100% 0, transparent 13.500px, #cbdcf6 14px) right / 14px 14px no-repeat; }
.active > * { position: relative; z-index: 1; }
.plus { margin-left: 13px; }
.win-btns { margin-left: auto; margin-right: 22px; display: flex; gap: 43px; }
.toolbar-wrap { flex: none; height: 59px; background: #85ade9; }
.toolbar { height: 59px; background: #cbdcf6; border-bottom: 1px solid #a9b6d2; border-radius: 10px 10px 0 0; display: flex; align-items: center; }
.nav { width: 150px; padding-left: 19.500px; display: flex; gap: 28.500px; flex: none; }
.omnibox { width: 1597px; height: 42px; border-radius: 21px; background: #f4f7fc; display: flex; align-items: center; padding: 0 19px 0 6px; }
.info { width: 29px; height: 29px; border-radius: 50%; background: #cbdcf6; display: flex; align-items: center; justify-content: center; margin-right: 12px; }
.url { font-family: "Open Sans", "Noto Sans", sans-serif; font-size: 17px; letter-spacing: -0.230px; color: #5d6269; white-space: nowrap; }
.url b { font-weight: 400; color: #16191d; }
.key { margin-left: auto; margin-right: 18px; }
.puzzle { margin-left: 24px; }
.bar-rule { width: 2px; height: 20px; background: #85ade9; margin-left: 20px; }
.avatar { margin-left: 20px; }
.dots { margin-left: 30px; }

/* web page */
.viewport { height: 911px; flex: none; display: flex; }
.page { width: 1906px; position: relative; display: flex; flex-direction: column; background: #fff; overflow: hidden; }
.site-head { width: 1506px; height: 100px; margin-left: 200px; background: #ff4500; box-shadow: 0 3px 0 #e2e2e3; position: relative; z-index: 2; display: flex; padding-top: 19px; flex: none; }
.logo-a { font: 700 97px "Open Sans", sans-serif; fill: #080808; }
.logo-b { font: italic 700 62px "Liberation Serif", serif; fill: #ee7623; }
.search-col { margin-left: 27px; width: 602px; }
.search { margin-left: 36px; width: 566px; height: 48px; border: 2px solid #000; border-radius: 13px; background: #fff; display: flex; overflow: hidden; }
.search input { width: 431px; flex: none; border: 0; padding: 0 0 0 19px; font: 16.670px "Liberation Sans", Arial, sans-serif; }
::placeholder { color: #757575; opacity: 1; }
.search button { flex: 1; border: 0; padding: 0 0 2px 7px; background: #ddd; color: #888; font: 700 17.500px "Liberation Sans", Arial, sans-serif; display: flex; align-items: center; justify-content: center; gap: 5px; }
.keywords { font-weight: 700; font-size: 16px; line-height: 18px; margin-top: 6px; }
.links { margin-left: auto; margin-right: 18px; display: flex; gap: 25px; }
.link { display: flex; align-items: center; height: 47px; font-weight: 700; font-size: 19.750px; color: #5d6851; white-space: nowrap; }
.link i { width: 47px; height: 47px; border-radius: 50%; background: #fff; display: flex; align-items: center; justify-content: center; margin-right: 7px; }

.contact { display: flex; padding-left: 263px; height: 294px; flex: none; }
.bank { width: 704px; font-size: 20px; line-height: 23px; flex: none; }
.bank p { margin: 0 0 23px; white-space: nowrap; }
.bank .note { margin-top: 69px; font-weight: 700; letter-spacing: -0.010px; }
.panels { display: flex; padding-left: 262px; height: 497px; flex: none; }
h2 { margin: 0; height: 46px; padding: 11px 0 0; font-weight: 400; font-size: 27.500px; line-height: 32px; color: #808080; border-bottom: 2px solid #dcdcdc; white-space: nowrap; }
.form-col { width: 610px; margin-right: 68px; }
.team-col { width: 678px; }
form { padding: 24px 0 0 12px; font-size: 20px; }
.row { display: flex; align-items: center; height: 36.500px; margin-bottom: 12px; }
.row span { width: 167px; flex: none; white-space: nowrap; }
.row input { width: 385px; height: 100%; border: 1px solid #767676; border-radius: 2px; padding: 0 0 1px 7px; font: 16.670px "Liberation Sans", Arial, sans-serif; }
.row.tall { height: 102px; margin-bottom: 17px; }
.row.tall span { padding-top: 3px; }
.row textarea { width: 390px; height: 102px; border: 1px solid #767676; border-radius: 1px; padding: 0; font: 16.670px "Liberation Sans", Arial, sans-serif; }
.send { display: block; margin-left: 167px; width: 165px; height: 35px; border: 1px solid #00cc99; background: #fff; padding: 0 0 1px; font: 16.670px "Liberation Sans", Arial, sans-serif; white-space: nowrap; }
table { margin-top: 25px; width: 633px; table-layout: fixed; border-collapse: collapse; font-size: 20px; text-align: center; }
.c-name { width: 214px; }
.c-id { width: 112px; }
.c-sex { width: 92px; }
.c-class { width: 68px; }
.c-share { width: 146px; }
th, td { border: 1px solid #00cc99; height: 46px; padding: 0; white-space: nowrap; }
tr:nth-child(even) { background: #f1f1f1; }
.site-foot { height: 20px; background: #272425; flex: none; }
.to-top { position: absolute; left: 1837px; top: 843px; width: 50px; height: 50px; border-radius: 50%; background: rgba(190, 190, 190, 0.82); background: linear-gradient(#c9c9c9 48px, #3c393a 48px); display: flex; align-items: center; justify-content: center; }
.scroll { width: 14px; background: #ededed; padding-top: 265px; }
.thumb { height: 485px; background: #8e8e8e; }

/* map labels */
.map text { font-family: Roboto, sans-serif; }
.poi text { font-size: 52px; fill: #8f4800; stroke: #8c8d8f; stroke-width: 4px; paint-order: stroke; }
.poi .blue { fill: #1f4e9e; }
.street text { font-size: 43px; font-weight: 500; fill: #303236; stroke: #909192; stroke-width: 4px; paint-order: stroke; }
.map .google { font: 500 58px "Open Sans", sans-serif; stroke: #e4e4e4; stroke-width: 7px; paint-order: stroke; }
.legal text { font-size: 36px; fill: #111; }

/* taskbar */
.taskbar { height: 60px; flex: none; display: flex; justify-content: space-between; background: linear-gradient(90deg, #e3e6f0 0%, #e1e4ef 60%, #e6e2ea 82%, #f0dfdf 96%, #f2dedb 100%); }
.apps { display: flex; padding-left: 630.5px; }
.app { width: 55.100px; height: 60px; display: flex; align-items: center; justify-content: center; position: relative; }
.app > svg { position: relative; }
.open::after, .on::after { content: ""; position: absolute; top: 50px; left: 24px; width: 8px; height: 4px; border-radius: 2px; background: #868789; }
.on::before { content: ""; position: absolute; left: 4px; top: 6px; width: 44px; height: 48px; border-radius: 5px; background: #f3f5fa; box-shadow: 4px 0 0 #eceef5, 0 0 0 1px #d9dce6; }
.on::after { left: 18px; width: 20px; background: #0a77d5; }
.zalo { font: 700 10px "Open Sans", sans-serif; fill: #0b62e8; }
.word { font: 700 11.500px "Open Sans", sans-serif; fill: #fff; }
.tray { display: flex; align-items: center; width: 306px; }
.tray > svg:nth-child(1) { margin: 0 14px 0 1px; }
.tray > svg:nth-child(2) { margin-right: 12px; }
.tray > svg:nth-child(3) { margin-right: 13px; }
.tray > svg:nth-child(4) { margin-right: 14px; }
.tray > svg:nth-child(5) { margin-right: 12px; }
.tray > svg:nth-child(6) { margin-right: 11px; }
.clock { margin-left: 12px; width: 78px; flex: none; display: flex; flex-direction: column; align-items: center; font: 15px/21px "Open Sans", "Noto Sans", sans-serif; letter-spacing: -0.450px; color: #1c1c1c; white-space: nowrap; }
</style>
